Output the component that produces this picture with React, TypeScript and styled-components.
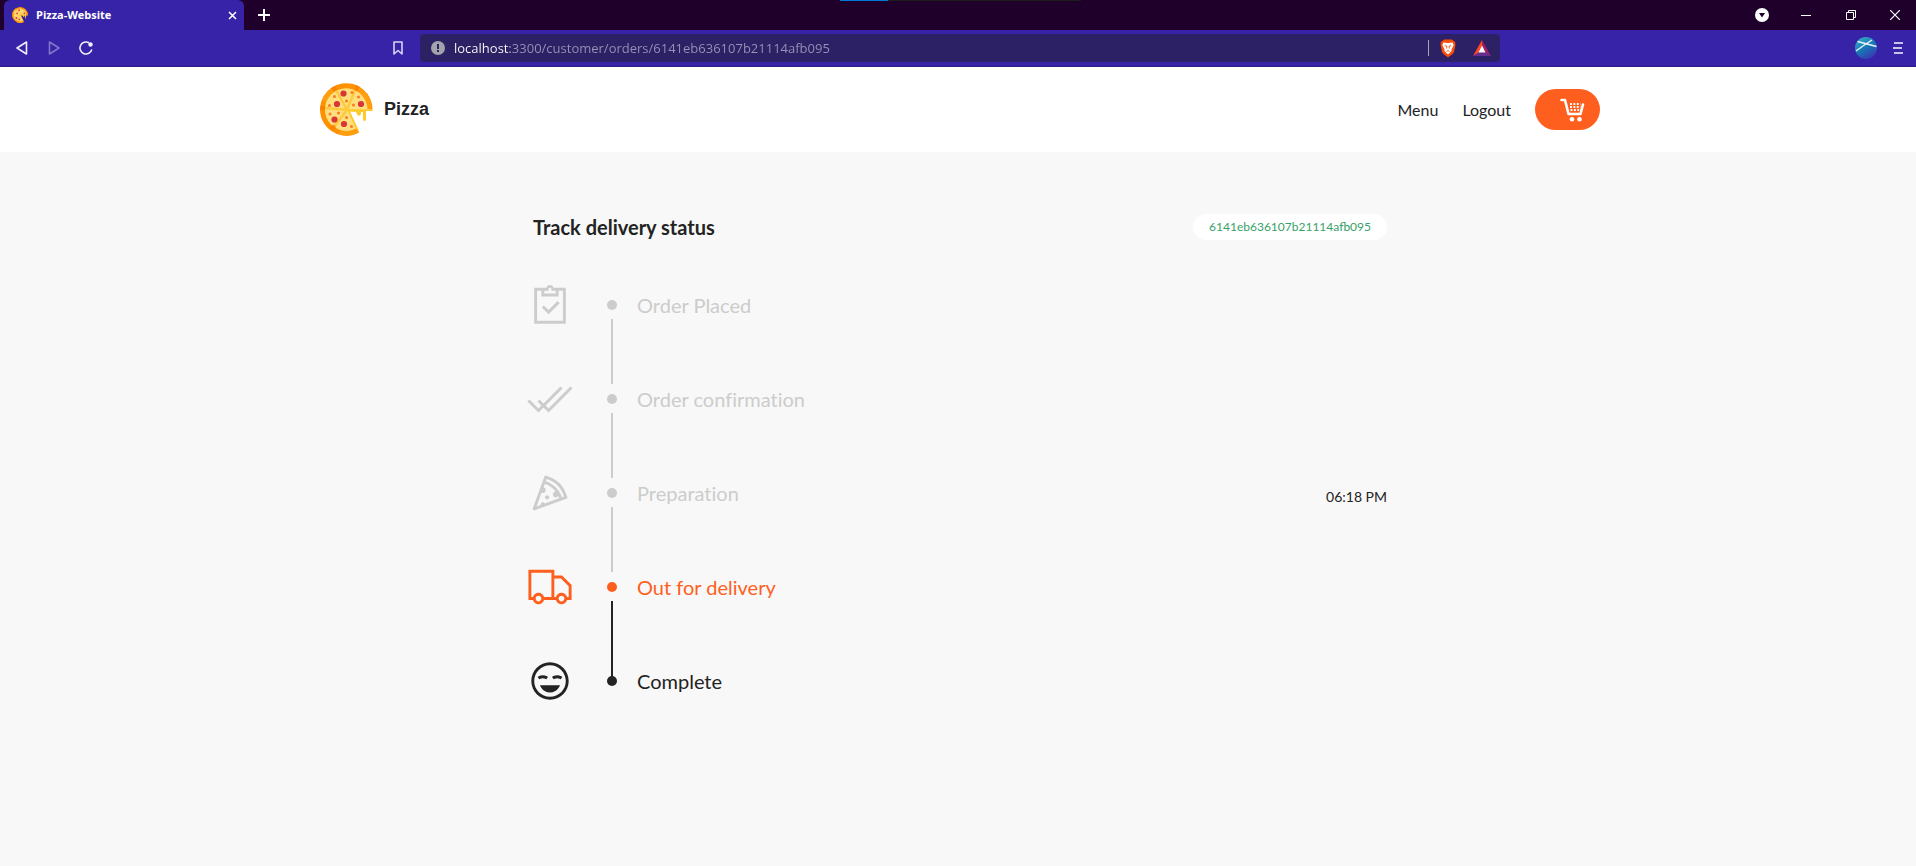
import React from 'react';
import styled, { createGlobalStyle } from 'styled-components';
import {
  LiaClipboardCheckSolid,
  LiaCheckDoubleSolid,
  LiaPizzaSliceSolid,
  LiaTruckSolid,
  LiaLaughBeam,
} from 'react-icons/lia';

const color = {
  frame: '#1e002b',
  toolbar: '#3623a8',
  toolbarEdge: '#2a1b83',
  address: '#2c2164',
  primary: '#fe5f1e',
  ink: '#232323',
  done: '#cccccc',
  page: '#f8f8f8',
  green: '#38a169',
};

const chromeFont = "'Open Sans', 'Noto Sans', sans-serif";

const GlobalStyle = createGlobalStyle`
  *, *::before, *::after { box-sizing: border-box; }
  html, body { margin: 0; min-height: 100%; background: ${color.page}; }
  body { font-family: Lato, 'Liberation Sans', sans-serif; color: ${color.ink}; }
  button { padding: 0; border: 0; background: none; color: inherit; font: inherit; cursor: pointer; }
  svg { display: block; }
`;

/* Browser frame */

const TabStrip = styled.div`
  display: flex;
  align-items: center;
  height: 30px;
  padding-left: 4px;
  background: ${color.frame};
  color: #fff;
  font-family: ${chromeFont};
`;

const Tab = styled.div`
  display: flex;
  align-items: center;
  gap: 8px;
  width: 240px;
  height: 30px;
  padding: 0 6px 0 8px;
  border-radius: 6px 6px 0 0;
  background: ${color.toolbar};
`;

const TabTitle = styled.span`
  flex: 1;
  font-size: 11px;
  font-weight: 700;
  line-height: 16px;
`;

const IconButton = styled.button<{ $w?: number; $dim?: boolean }>`
  display: flex;
  align-items: center;
  justify-content: center;
  flex: none;
  width: ${(p) => p.$w ?? 32}px;
  height: 28px;
  opacity: ${(p) => (p.$dim ? 0.4 : 1)};
`;

const LoadTrack = styled.div`
  align-self: flex-start;
  width: 241px;
  height: 1px;
  margin: 0 auto 0 556px;
  background: #1d1a1c;
`;

const LoadBar = styled.div`
  width: 20%;
  height: 1px;
  background: #0078d7;
`;

const WindowControls = styled.div`
  display: flex;
  align-items: center;
`;

const Toolbar = styled.div`
  display: grid;
  grid-template-columns: minmax(0, 1fr) minmax(0, 1080px) minmax(0, 1fr);
  align-items: center;
  height: 37px;
  padding-left: 4px;
  border-bottom: 1px solid ${color.toolbarEdge};
  background: ${color.toolbar};
  color: #f1eefb;
`;

const ToolGroup = styled.div<{ $end?: boolean }>`
  display: flex;
  align-items: center;
  justify-content: ${(p) => (p.$end ? 'flex-end' : 'flex-start')};
  padding: ${(p) => (p.$end ? '0 2px 0 0' : '0 6px 0 2px')};
`;

const Spacer = styled.div`
  flex: 1;
`;

const AddressBar = styled.div`
  display: flex;
  align-items: center;
  height: 28px;
  padding: 0 1px 0 11px;
  border-radius: 4px;
  background: ${color.address};
`;

const AddressInput = styled.input`
  flex: 1;
  min-width: 0;
  height: 24px;
  margin-left: 9px;
  padding: 0;
  border: 0;
  outline: 0;
  background: linear-gradient(90deg, #fff 56px, #9892b8 56px);
  background-clip: text;
  color: transparent;
  font-family: ${chromeFont};
  font-size: 13px;
`;

const Divider = styled.span`
  width: 1px;
  height: 16px;
  margin-right: 2px;
  background: #a9a7ac;
`;

/* Site */

const Header = styled.header`
  padding-left: 4px;
  background: #fff;
`;

const Nav = styled.nav`
  display: flex;
  align-items: center;
  justify-content: space-between;
  max-width: 1280px;
  height: 85px;
  margin: 0 auto;
`;

const Brand = styled.a`
  display: flex;
  align-items: center;
  gap: 11px;
  color: ${color.ink};
  font-family: 'Liberation Sans', sans-serif;
  font-size: 18px;
  font-weight: 700;
  text-decoration: none;
`;

const NavList = styled.ul`
  display: flex;
  align-items: center;
  gap: 24px;
  margin: 0;
  padding: 0;
  list-style: none;
`;

const NavLink = styled.a`
  color: ${color.ink};
  font-size: 16px;
  line-height: 24px;
  text-decoration: none;
`;

const CartLink = styled.a`
  display: flex;
  align-items: center;
  justify-content: flex-end;
  width: 65px;
  height: 41px;
  padding-right: 15px;
  border-radius: 21px;
  background: ${color.primary};
`;

const Main = styled.main`
  padding: 61px 0 0 4px;
`;

const Status = styled.section`
  max-width: 854px;
  margin: 0 auto;
`;

const StatusHead = styled.div`
  display: flex;
  align-items: center;
  justify-content: space-between;
  margin-bottom: 40px;
`;

const Title = styled.h1`
  margin: 0;
  font-size: 20px;
  font-weight: 700;
  line-height: 28px;
`;

const OrderId = styled.span`
  padding: 4px 16px;
  border-radius: 13px;
  background: #fff;
  color: ${color.green};
  font-size: 12px;
  line-height: 18px;
`;

const Steps = styled.ol`
  margin: 0;
  padding: 0;
  list-style: none;
`;

type State = 'done' | 'current' | 'next';

const stateColor: Record<State, string> = {
  done: color.done,
  current: color.primary,
  next: color.ink,
};

const Step = styled.li<{ $state: State }>`
  display: grid;
  grid-template-columns: 34px 90px 1fr auto;
  align-items: start;
  height: 94px;
  color: ${(p) => stateColor[p.$state]};
`;

const StepIcon = styled.span`
  display: flex;
  align-items: center;
  justify-content: center;
  height: 48px;
  svg { flex: none; width: 46px; height: 46px; }
`;

const Rail = styled.span<{ $line: 'short' | 'long' | 'none'; $lineColor: string }>`
  display: flex;
  flex-direction: column;
  align-items: center;
  gap: ${(p) => (p.$line === 'none' ? 0 : 9)}px;
  width: 90px;
  padding-top: 19px;

  &::before {
    content: '';
    width: 10px;
    height: 10px;
    border-radius: 50%;
    background: currentColor;
  }

  &::after {
    content: '';
    width: 2px;
    height: ${(p) => ({ short: 65, long: 76, none: 0 })[p.$line]}px;
    background: ${(p) => p.$lineColor};
  }
`;

const StepName = styled.span`
  margin-left: -20px;
  font-size: 20px;
  font-variant-ligatures: none;
  line-height: 48px;
`;

const StepTime = styled.time`
  color: ${color.ink};
  font-size: 14px;
  line-height: 56px;
`;

const PizzaMark = ({ size }: { size: number }) => (
  <svg width={size} height={size} viewBox="0 0 53 53" aria-hidden="true">
    <path d="M27 26 L52.600 26.500 A26.300 26.300 0 1 0 39 49.500 Z" fill="#ff9100" />
    <path d="M36 3.500 A25 25 0 0 1 52 26.500 L47 26 A21 21 0 0 0 33 6 Z M2 18 A26 26 0 0 1 14 4 L17 8 A21 21 0 0 0 6 20 Z M18 51 A26 26 0 0 0 39 49.500 L36 45 A21 21 0 0 1 20 47 Z" fill="#ff9f0f" />
    <path d="M27 26 L47.500 26 A21.300 21.300 0 1 0 36.500 45.300 Z" fill="#ffdf7e" />
    <g stroke="#ffc93c" strokeWidth="2.400">
      <path d="M27 27 L5 25 M27 27 L16 7 M27 27 L35 7 M27 27 L14 44" />
    </g>
    <g stroke="#f57c00" strokeWidth="4">
      <path d="M0.500 25 H5 M13 4 L15.500 8 M38 3 L35.500 7.500 M12 46 L14.500 42.500" opacity=".75" />
    </g>
    <path d="M27 26 L52.600 26.500 V28 H46 V36 Q46 38 44.500 38 Q43 38 43 36 V29 H41 V31 Q40 34 37.500 32 L36 29 L30 28.500 L39 48 L36 46 Z" fill="#ffca28" />
    <g fill="#d93636">
      <circle cx="23.500" cy="10.500" r="3.100" />
      <circle cx="17" cy="21" r="3.100" />
      <circle cx="41" cy="21" r="3.100" />
      <circle cx="14.500" cy="36.500" r="3.100" />
      <circle cx="24" cy="41" r="3.100" />
    </g>
    <g fill="#fb7a24">
      <circle cx="14.500" cy="13.500" r="1.500" />
      <circle cx="32" cy="9.500" r="1.500" />
      <circle cx="38.500" cy="14" r="1.500" />
      <circle cx="26.500" cy="18" r="1.500" />
      <circle cx="33.500" cy="22" r="1.500" />
      <circle cx="9.500" cy="22.500" r="1.500" />
      <circle cx="10" cy="31" r="1.500" />
      <circle cx="18.500" cy="30" r="1.500" />
      <circle cx="26.500" cy="34.500" r="1.500" />
      <circle cx="31.500" cy="43.500" r="1.500" />
    </g>
  </svg>
);

const CartIcon = () => (
  <svg width="25" height="24" viewBox="0 0 25 24" fill="none" aria-hidden="true">
    <path d="M1.500 2 H5 L8.500 16 H20.500 L23 6.500" stroke="#fff" strokeWidth="2.600" strokeLinecap="round" strokeLinejoin="round" />
    <path d="M10 6 H20.500 M10 9 H20.500 M10.500 12 H20" stroke="#fff" strokeWidth="1.800" strokeDasharray="1.900 1.500" />
    <circle cx="12" cy="21.300" r="2.300" fill="#fff" />
    <circle cx="19.500" cy="21.300" r="2.300" fill="#fff" />
  </svg>
);

const BraveIcon = () => (
  <svg width="16" height="19" viewBox="0 0 16 19" aria-hidden="true">
    <path d="M4 0.500 H12 L13.500 2 L15 2.500 L15.500 6 L14 13 Q13 15 8 18.500 Q3 15 2 13 L0.500 6 L1 2.500 L2.500 2 Z" fill="#fb4d0a" />
    <path d="M3.500 3.500 L8 4 L12.500 3.500 L13.700 6 L11.500 10.500 L11.500 12 L8 15.500 L4.500 12 L4.500 10.500 L2.300 6 Z" fill="#fff" />
    <path d="M4.800 6.500 L6.800 7.200 M11.200 6.500 L9.200 7.200 M6.800 7 V9.500 M9.200 7 V9.500 M6.500 12.500 L8 11.500 L9.500 12.500" stroke="#fb4d0a" strokeWidth="0.900" fill="none" />
  </svg>
);

const RewardsIcon = () => (
  <svg width="18" height="16" viewBox="0 0 18 16" aria-hidden="true">
    <path d="M9 0 L0 16 L5.500 13 L9 6 Z" fill="#ff4724" />
    <path d="M9 0 L18 16 L12.500 13 L9 6 Z" fill="#9e1f63" />
    <path d="M0 16 H18 L12.500 12.500 H5.500 Z" fill="#662d91" />
    <path d="M9 5.500 L12.500 12.500 H5.500 Z" fill="#fff" />
  </svg>
);

const ProfileIcon = () => (
  <svg width="22" height="22" viewBox="0 0 22 22" aria-hidden="true">
    <defs>
      <linearGradient id="avatar" x1="0" y1="0" x2="0.600" y2="1">
        <stop offset="0" stopColor="#3cb4cc" />
        <stop offset="0.600" stopColor="#1874b4" />
        <stop offset="1" stopColor="#3a3ab4" />
      </linearGradient>
    </defs>
    <circle cx="11" cy="11" r="11" fill="url(#avatar)" />
    <path d="M1 14 Q9 8 17 3 M2.500 4.500 Q12 7 21.500 9.500" stroke="#e8f6fa" strokeWidth="1.300" fill="none" />
  </svg>
);

const steps: { name: string; state: State; Icon: React.ComponentType; time?: string }[] = [
  { name: 'Order Placed', state: 'done', Icon: LiaClipboardCheckSolid },
  { name: 'Order confirmation', state: 'done', Icon: LiaCheckDoubleSolid },
  { name: 'Preparation', state: 'done', Icon: LiaPizzaSliceSolid, time: '06:18 PM' },
  { name: 'Out for delivery', state: 'current', Icon: LiaTruckSolid },
  { name: 'Complete', state: 'next', Icon: LiaLaughBeam },
];

const lineKind = (index: number) => {
  if (index === steps.length - 1) return 'none';
  return index === steps.length - 2 ? 'long' : 'short';
};

export default function App() {
  return (
    <>
      <GlobalStyle />
      <TabStrip>
        <Tab>
          <PizzaMark size={16} />
          <TabTitle>Pizza-Website</TabTitle>
          <IconButton $w={12} aria-label="Close tab">
            <svg width="9" height="9" viewBox="0 0 9 9" stroke="#fff" strokeWidth="1.500">
              <path d="M1 1 L8 8 M8 1 L1 8" />
            </svg>
          </IconButton>
        </Tab>
        <IconButton $w={40} aria-label="New tab">
          <svg width="12" height="12" viewBox="0 0 12 12" stroke="#fff" strokeWidth="2">
            <path d="M6 0 V12 M0 6 H12" />
          </svg>
        </IconButton>
        <LoadTrack>
          <LoadBar />
        </LoadTrack>
        <WindowControls>
          <IconButton $w={44} aria-label="Search tabs">
            <svg width="14" height="14" viewBox="0 0 14 14">
              <circle cx="7" cy="7" r="7" fill="#fff" />
              <path d="M4 5 H10 L7 9.500 Z" fill={color.frame} />
            </svg>
          </IconButton>
          <IconButton $w={44} aria-label="Minimize">
            <svg width="10" height="10" viewBox="0 0 10 10" stroke="#fff">
              <path d="M0 5.500 H10" />
            </svg>
          </IconButton>
          <IconButton $w={46} aria-label="Restore">
            <svg width="10" height="10" viewBox="0 0 10 10" stroke="#fff" fill="none">
              <path d="M0.500 2.500 H7.500 V9.500 H0.500 Z M2.500 2.500 V0.500 H9.500 V7.500 H7.500" />
            </svg>
          </IconButton>
          <IconButton $w={42} aria-label="Close window">
            <svg width="10" height="10" viewBox="0 0 10 10" stroke="#fff" strokeWidth="1.200">
              <path d="M0 0 L10 10 M10 0 L0 10" />
            </svg>
          </IconButton>
        </WindowControls>
      </TabStrip>

      <Toolbar>
        <ToolGroup>
          <IconButton aria-label="Back">
            <svg width="12" height="14" viewBox="0 0 12 14" fill="none" stroke="currentColor" strokeWidth="1.600" strokeLinejoin="round">
              <path d="M10.500 1 V13 L1 7 Z" />
            </svg>
          </IconButton>
          <IconButton $dim aria-label="Forward">
            <svg width="12" height="14" viewBox="0 0 12 14" fill="none" stroke="currentColor" strokeWidth="1.600" strokeLinejoin="round">
              <path d="M1.500 1 V13 L11 7 Z" />
            </svg>
          </IconButton>
          <IconButton aria-label="Reload">
            <svg width="14" height="14" viewBox="0 0 14 14" fill="none" stroke="currentColor" strokeWidth="1.600">
              <path d="M10 1.800 A6 6 0 1 0 12.800 8.500" />
              <circle cx="11.500" cy="3.500" r="2.200" fill="currentColor" stroke="none" />
            </svg>
          </IconButton>
          <Spacer />
          <IconButton aria-label="Bookmark">
            <svg width="10" height="14" viewBox="0 0 10 14" fill="none" stroke="#d8d2f2" strokeWidth="1.600" strokeLinejoin="round">
              <path d="M1 1 H9 V13 L5 9.500 L1 13 Z" />
            </svg>
          </IconButton>
        </ToolGroup>
        <AddressBar>
          <svg width="14" height="14" viewBox="0 0 14 14" aria-hidden="true">
            <circle cx="7" cy="7" r="7" fill="#a2a3ab" />
            <path d="M6 3 H8 V8 H6 Z M6 9 H8 V11 H6 Z" fill={color.address} />
          </svg>
          <AddressInput
            aria-label="Address"
            defaultValue="localhost:3300/customer/orders/6141eb636107b21114afb095"
          />
          <Divider />
          <IconButton $w={34} aria-label="Shields">
            <BraveIcon />
          </IconButton>
          <IconButton $w={34} aria-label="Rewards">
            <RewardsIcon />
          </IconButton>
        </AddressBar>
        <ToolGroup $end>
          <IconButton aria-label="Profile">
            <ProfileIcon />
          </IconButton>
          <IconButton aria-label="Menu">
            <svg width="10" height="12" viewBox="0 0 10 12" stroke="#c9c3ea" strokeWidth="2">
              <path d="M1 1 H10 M0 6 H9 M1 11 H10" />
            </svg>
          </IconButton>
        </ToolGroup>
      </Toolbar>

      <Header>
        <Nav>
          <Brand href="#">
            <PizzaMark size={53} />
            Pizza
          </Brand>
          <NavList>
            <li>
              <NavLink href="#">Menu</NavLink>
            </li>
            <li>
              <NavLink href="#">Logout</NavLink>
            </li>
            <li>
              <CartLink href="#" aria-label="Cart">
                <CartIcon />
              </CartLink>
            </li>
          </NavList>
        </Nav>
      </Header>

      <Main>
        <Status>
          <StatusHead>
            <Title>Track delivery status</Title>
            <OrderId>6141eb636107b21114afb095</OrderId>
          </StatusHead>
          <Steps>
            {steps.map(({ name, state, Icon, time }, i) => (
              <Step key={name} $state={state}>
                <StepIcon>
                  <Icon />
                </StepIcon>
                <Rail $line={lineKind(i)} $lineColor={state === 'done' ? color.done : color.ink} />
                <StepName>{name}</StepName>
                {time && <StepTime>{time}</StepTime>}
              </Step>
            ))}
          </Steps>
        </Status>
      </Main>
    </>
  );
}
